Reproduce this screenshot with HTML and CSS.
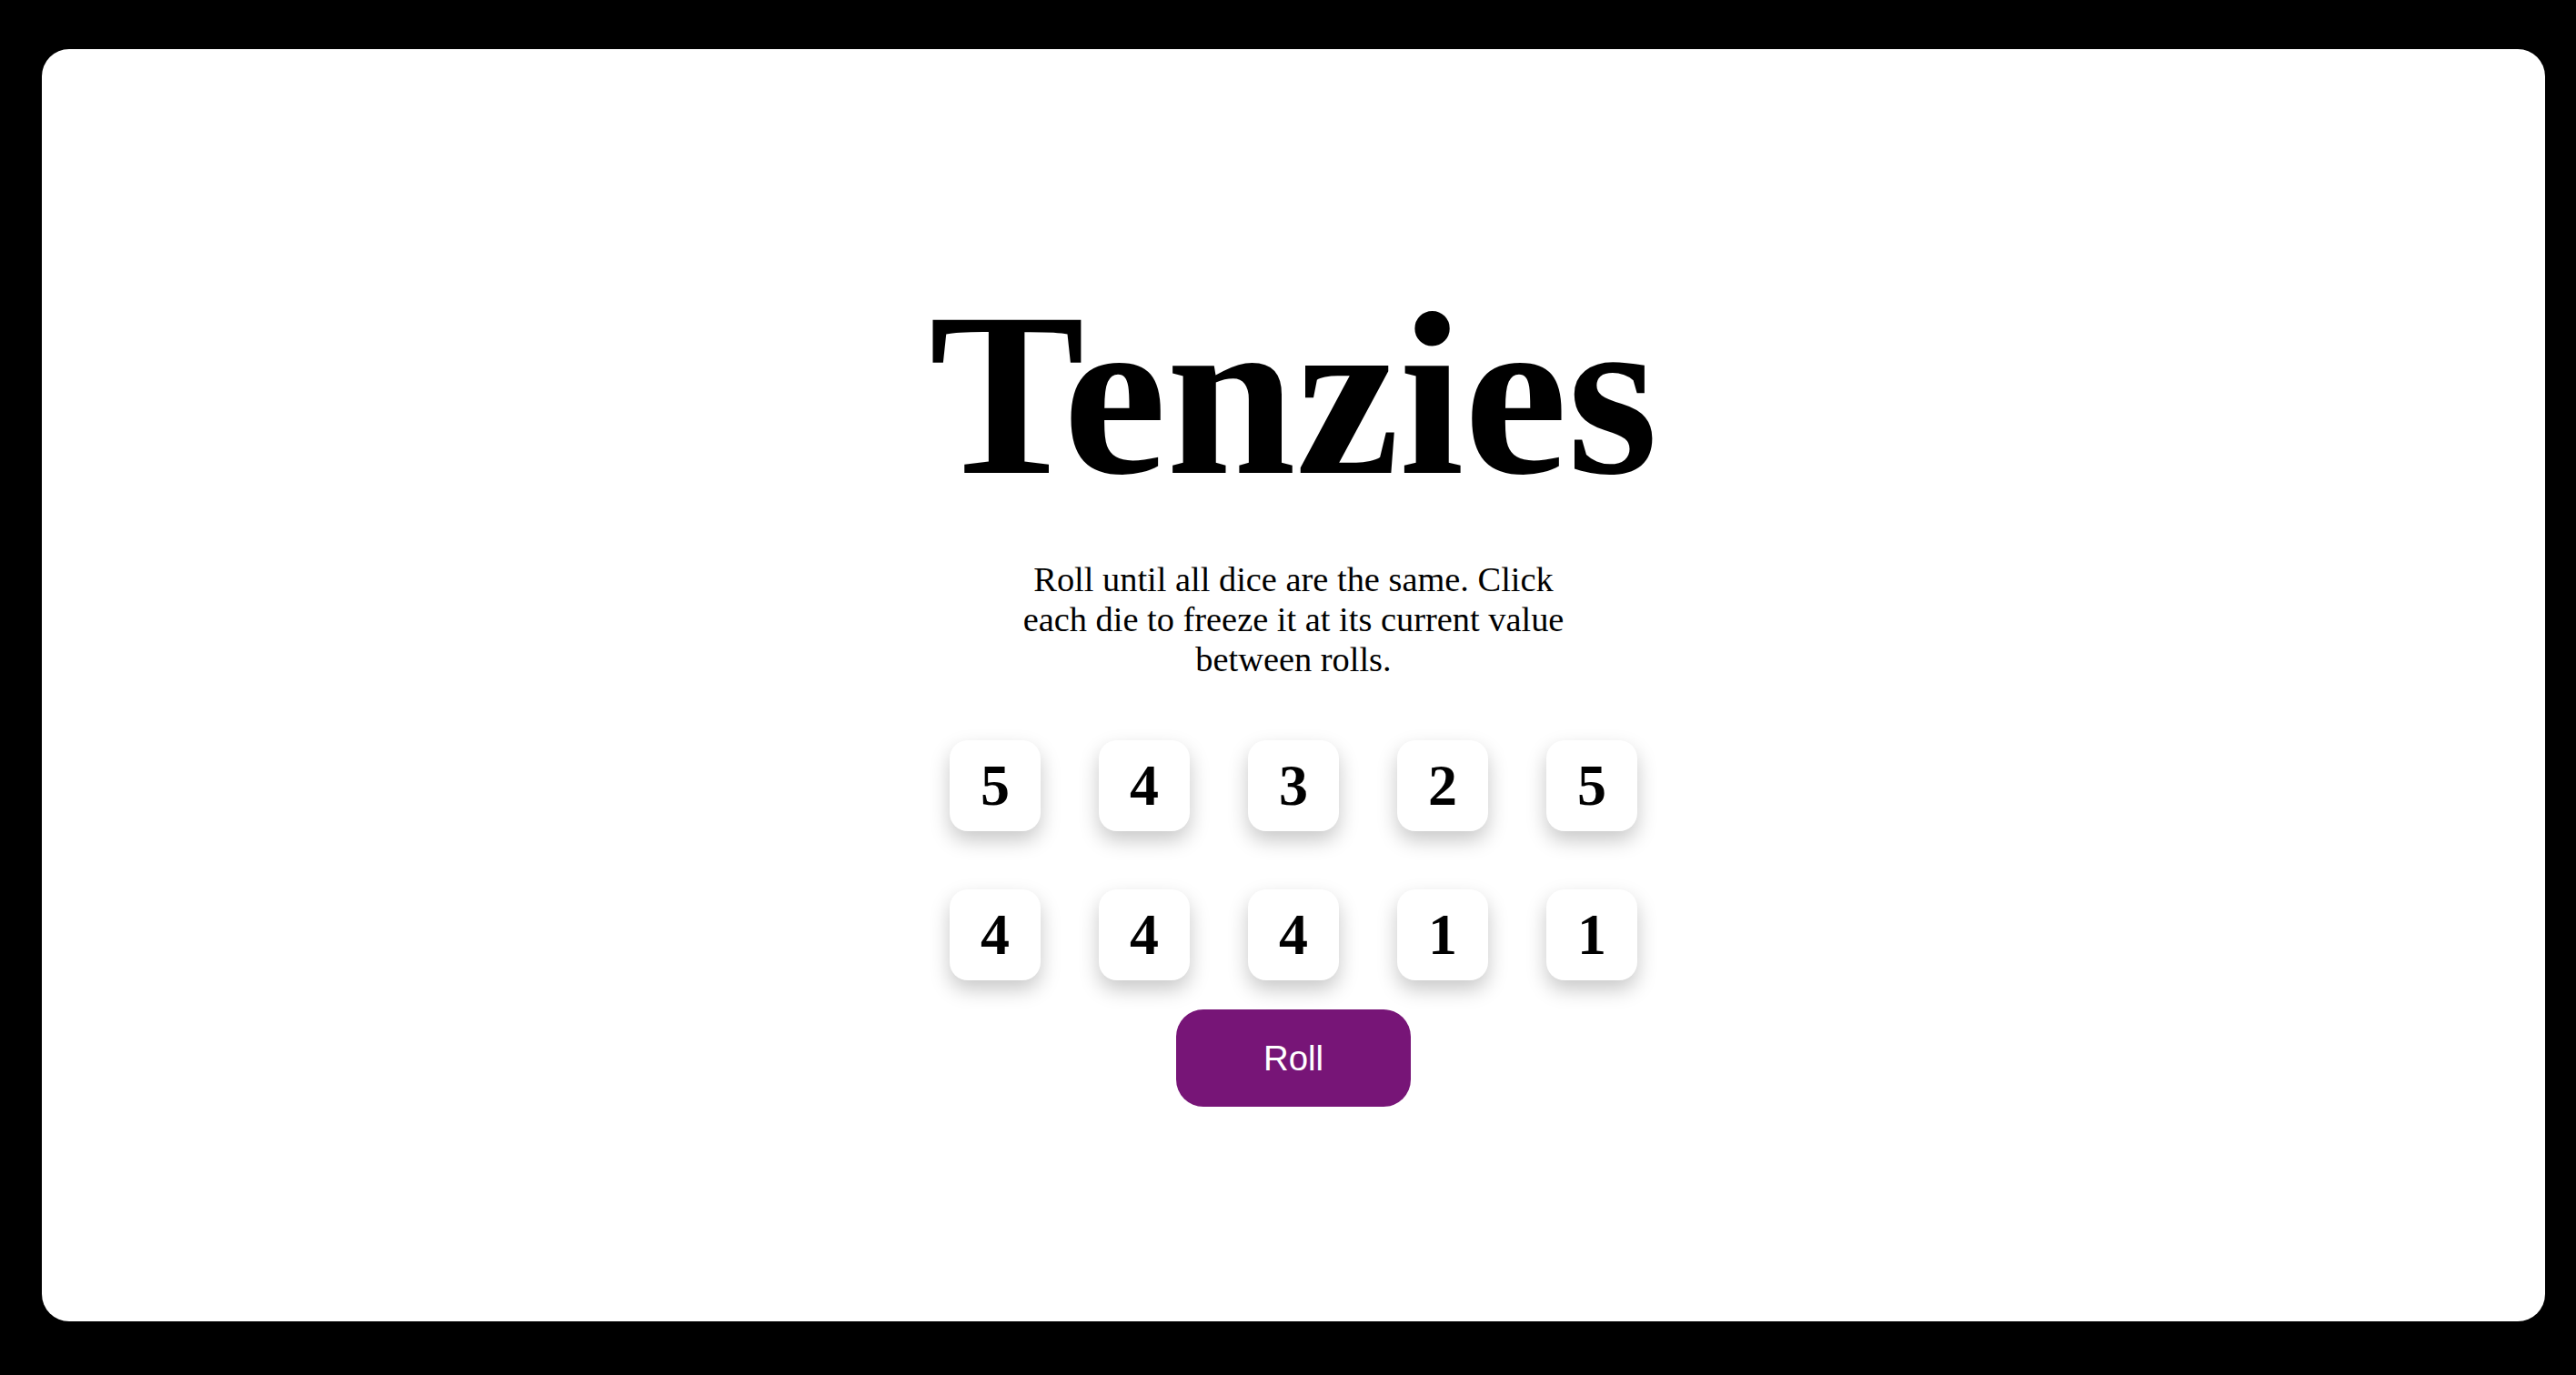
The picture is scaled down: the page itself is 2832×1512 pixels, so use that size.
FILE: index.html
```html
<!DOCTYPE html>
<html lang="en">
<head>
<meta charset="utf-8">
<title>Tenzies</title>
<link rel="stylesheet" href="styles.css">
</head>
<body>
<main class="board">
  <h1 class="title">Tenzies</h1>
  <p class="instructions">Roll until all dice are the same. Click each die to freeze it at its current value between rolls.</p>
  <div class="dice">
    <button class="die">5</button>
    <button class="die">4</button>
    <button class="die">3</button>
    <button class="die">2</button>
    <button class="die">5</button>
    <button class="die">4</button>
    <button class="die">4</button>
    <button class="die">4</button>
    <button class="die">1</button>
    <button class="die">1</button>
  </div>
  <button class="roll">Roll</button>
</main>
</body>
</html>
```
FILE: styles.css
```css
* { box-sizing: border-box; }

html, body {
  margin: 0;
  height: 100%;
}

body {
  background: #000;
  padding: 54px 34px 59px 46px;
  font-family: "Liberation Serif", "Times New Roman", serif;
}

.board {
  background: #fff;
  height: 100%;
  border-radius: 30px;
  display: flex;
  flex-direction: column;
  align-items: center;
  padding-top: 252px;
}

.title {
  margin: 0;
  font-size: 256px;
  line-height: 256px;
  font-weight: 700;
  color: #000;
}

.instructions {
  margin: 53px 0 0;
  max-width: 600px;
  font-size: 38.4px;
  line-height: 44px;
  text-align: center;
  color: #000;
}

.dice {
  margin-top: 67px;
  display: grid;
  grid-template-columns: repeat(5, 100px);
  column-gap: 64px;
  row-gap: 64px;
}

.die {
  width: 100px;
  height: 100px;
  border: none;
  border-radius: 20px;
  background: #fff;
  box-shadow: 0 10px 22px rgba(0, 0, 0, 0.22);
  font-family: "Liberation Serif", "Times New Roman", serif;
  font-weight: 700;
  font-size: 64px;
  color: #000;
  padding: 0;
  display: flex;
  align-items: center;
  justify-content: center;
}

.roll {
  margin-top: 32px;
  width: 258px;
  height: 107px;
  border: none;
  border-radius: 30px;
  background: #771577;
  color: #fff;
  font-family: "Liberation Sans", Arial, sans-serif;
  font-size: 38.4px;
  padding: 0;
}
```
